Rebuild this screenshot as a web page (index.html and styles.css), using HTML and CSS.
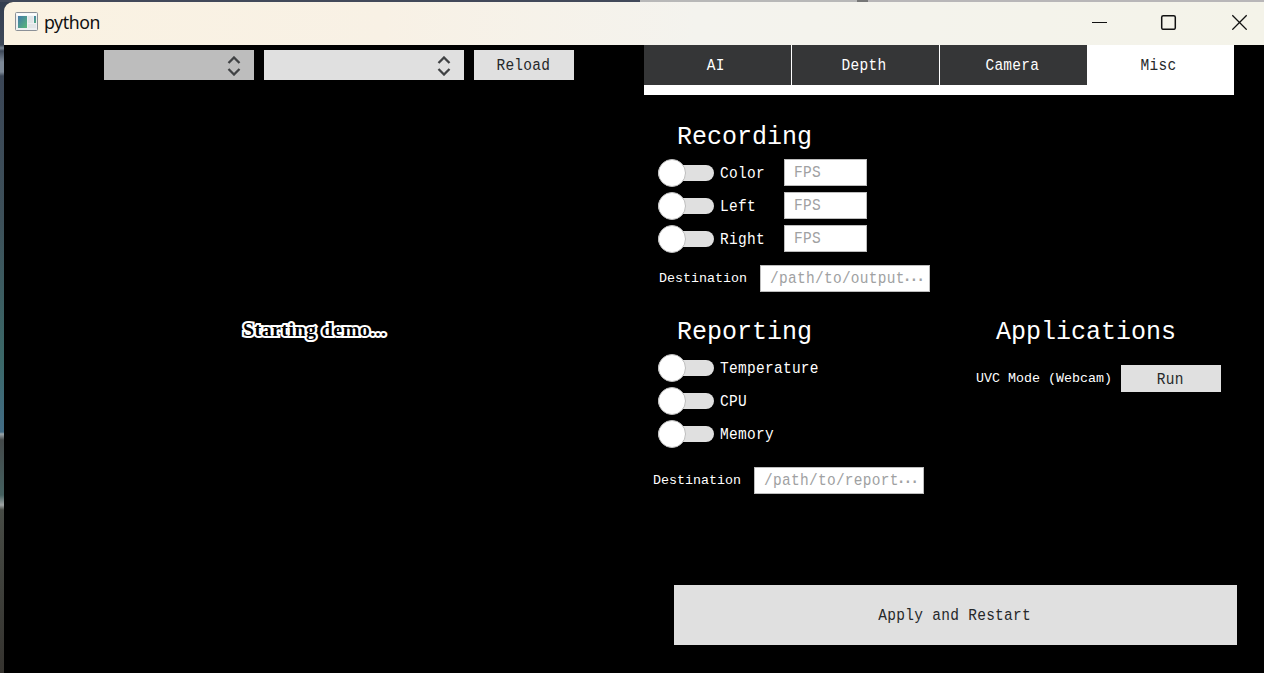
FILE: index.html
```html
<!DOCTYPE html>
<html lang="en">
<head>
<meta charset="utf-8">
<title>python</title>
<link rel="stylesheet" href="styles.css">
</head>
<body>
<div class="window">
  <header class="titlebar">
    <svg class="app-icon" width="23" height="19" viewBox="0 0 23 19">
      <defs><linearGradient id="g" x1="0" y1="0" x2="1" y2="1"><stop offset="0" stop-color="#4379ab"/><stop offset="1" stop-color="#58b878"/></linearGradient></defs>
      <rect x=".5" y=".5" width="22" height="18" rx="1" fill="#eef0f2" stroke="#8b9097"/>
      <rect x="1.5" y="1.5" width="20" height="2" fill="#fff"/>
      <rect x="3" y="4" width="9" height="12" fill="url(#g)"/>
      <rect x="13" y="4" width="5" height="7" fill="#e2e5e7"/>
      <rect x="13" y="12" width="8" height="4" fill="#e2e5e7"/>
      <rect x="19" y="4" width="2" height="7" fill="url(#g)"/>
    </svg>
    <span class="title">python</span>
    <svg class="controls" width="156" height="16" viewBox="0 0 156 16" fill="none" stroke="#111" stroke-width="1.3">
      <path d="M0 8.5H15" stroke-width="1"/>
      <rect x="69.7" y="1.7" width="13.6" height="13.6" rx="1.6" stroke-width="1.5"/>
      <path d="M140.3 1.3L154.7 15.7M154.7 1.3L140.3 15.7"/>
    </svg>
  </header>
  <main class="content">
    <section class="preview">
      <div class="toolbar">
        <div class="combo combo-device"><svg width="14" height="20" viewBox="0 0 14 20"><path d="M1.5 7L7 1.5L12.5 7M1.5 13L7 18.5L12.5 13"/></svg></div>
        <div class="combo combo-source"><svg width="14" height="20" viewBox="0 0 14 20"><path d="M1.5 7L7 1.5L12.5 7M1.5 13L7 18.5L12.5 13"/></svg></div>
        <button class="btn reload"><span class="narrow">Reload</span></button>
      </div>
      <div class="status">Starting demo...</div>
    </section>
    <section class="settings">
      <nav class="tabs">
        <div class="tab"><span class="narrow">AI</span></div>
        <div class="tab"><span class="narrow">Depth</span></div>
        <div class="tab"><span class="narrow">Camera</span></div>
        <div class="tab active"><span class="narrow">Misc</span></div>
      </nav>
      <div class="group recording">
        <h2>Recording</h2>
        <div class="row"><i class="switch"></i><span class="label"><span class="narrow">Color</span></span><div class="field fps"><span class="narrow">FPS</span></div></div>
        <div class="row"><i class="switch"></i><span class="label"><span class="narrow">Left</span></span><div class="field fps"><span class="narrow">FPS</span></div></div>
        <div class="row"><i class="switch"></i><span class="label"><span class="narrow">Right</span></span><div class="field fps"><span class="narrow">FPS</span></div></div>
        <div class="dest"><span class="small">Destination</span><div class="field path"><span class="narrow">/path/to/output</span><span class="dots">⋯</span></div></div>
      </div>
      <div class="lower">
        <div class="group reporting">
          <h2>Reporting</h2>
          <div class="row"><i class="switch"></i><span class="label"><span class="narrow">Temperature</span></span></div>
          <div class="row"><i class="switch"></i><span class="label"><span class="narrow">CPU</span></span></div>
          <div class="row"><i class="switch"></i><span class="label"><span class="narrow">Memory</span></span></div>
          <div class="dest"><span class="small">Destination</span><div class="field path"><span class="narrow">/path/to/report</span><span class="dots">⋯</span></div></div>
        </div>
        <div class="apps">
          <h2>Applications</h2>
          <div class="app-row"><span class="small">UVC Mode (Webcam)</span><button class="btn run"><span class="narrow">Run</span></button></div>
        </div>
      </div>
      <button class="btn apply"><span class="narrow">Apply and Restart</span></button>
    </section>
  </main>
</div>
</body>
</html>
```
FILE: styles.css
```css
*, *::before { box-sizing: border-box; }
body {
  margin: 0;
  width: 1264px;
  height: 673px;
  overflow: hidden;
  padding: 2px 0 0 4px;
  font-family: "Liberation Mono", monospace;
  background:
    linear-gradient(90deg, #42495a 0 640px, #b8b8b8 640px 857px, #777 857px 868px, #b8b6b8 868px) 0 0 / 100% 2px no-repeat,
    linear-gradient(#343e50 0, #3d4858 45px, #7d8997 48px, #3d4858 51px, #7d8997 62px, #7d8997 72px, #3b4656 76px, #3d5059 220px, #3b6868 360px, #426c85 432px, #9aa5aa 434px, #44494a 440px, #44605f 495px, #a0a5a5 505px, #474b45 510px, #35332f 673px);
}
.window { height: 671px; border-radius: 9px 0 0 0; overflow: hidden; background: #000; }
.titlebar {
  height: 43px;
  display: flex;
  align-items: center;
  padding: 0 17px 0 11px;
  background: linear-gradient(90deg, #faf2e2, #f8f1e5 30%, #f4f3ee 55%, #f4f3e9);
}
.app-icon { margin-bottom: 4px; }
.title { margin: 0 0 3px 6px; font: 17.7px/24px "Noto Sans", sans-serif; color: #111; letter-spacing: -.4px; }
.controls { margin: 0 -1px 3px auto; }
.content { display: flex; height: 628px; }
.preview { width: 640px; padding: 5px 0 0 100px; }
.toolbar { display: flex; gap: 10px; }
.combo { height: 30px; display: flex; align-items: center; justify-content: flex-end; padding-right: 13px; background: #e0e0e0; }
.combo svg { fill: none; stroke: #404244; stroke-width: 2.3; margin-top: 1px; }
.combo-device { width: 150px; background: #bdbdbd; }
.combo-source { width: 200px; }
.btn {
  border: 0; padding: 2px 1px 0 0; background: #e0e0e0; color: #26282a;
  display: flex; align-items: center; justify-content: center;
  font: 18px/20px "Liberation Mono", monospace;
}
.reload { width: 100px; height: 30px; }
.narrow { display: inline-block; font-size: 17.4px; line-height: 20px; letter-spacing: .35px; white-space: nowrap; transform: scaleX(.833); }
.status {
  width: max-content;
  margin: 237px 0 0 139px;
  font: bold 18.5px/26px "Liberation Serif", serif;
  letter-spacing: .4px;
  color: #000;
  -webkit-text-stroke: 4px #fff;
  paint-order: stroke fill;
  white-space: nowrap;
  transform: scaleX(1.08);
  transform-origin: left;
}
.settings { width: 620px; }
.tabs { display: flex; gap: 1px; width: 590px; height: 50px; padding-bottom: 10px; background: #fff; }
.tab { width: 147px; padding: 2px 3px 0 0; display: flex; align-items: center; justify-content: center; background: #353637; color: #fff; }
.tab:nth-child(3) { margin-right: -1px; }
.tab.active { background: #fff; color: #26282a; }
.group { padding-left: 14px; color: #fff; }
h2 { margin: 0; padding-top: 2px; font: 25px/28px "Liberation Mono", monospace; color: #fff; white-space: nowrap; }
.group h2 { margin-left: 19px; margin-bottom: 5px; }
.recording { padding-top: 27px; height: 222px; }
.row { display: flex; align-items: center; height: 33px; }
.switch { position: relative; width: 56px; height: 16px; margin-bottom: 1px; border-radius: 8px; background: #e0e0e0; }
.switch::before { content: ""; position: absolute; left: 0; top: -6px; width: 28px; height: 28px; border: 1px solid #bdbdbd; border-radius: 50%; background: #fff; }
.label { width: 70px; padding-left: 6px; }
.label .narrow, .field .narrow { transform-origin: left; }
.field { height: 27px; border: 1px solid #bdbdbd; background: #fff; color: #a0a1a2; padding-left: 9px; display: flex; align-items: center; }
.fps { width: 83px; margin: 0 0 2px 0; }
.path { width: 170px; }
.path .narrow { width: 134px; flex: none; }
.dots { width: 18px; font: 20px/20px "DejaVu Sans", sans-serif; }
.dest { display: flex; align-items: center; gap: 13px; margin: 9px 0 0 1px; }
.small { padding-top: 1px; font-size: 13.33px; line-height: 16px; letter-spacing: 0; white-space: nowrap; color: #fff; }
.lower { display: flex; height: 268px; }
.reporting { width: 332px; }
.reporting .dest { margin: 16px 0 0 -5px; }
.apps h2 { margin-left: 20px; }
.app-row { display: flex; align-items: center; gap: 9px; margin-top: 18px; }
.run { width: 100px; height: 27px; }
.apply { width: 563px; height: 60px; margin-left: 30px; }
```
